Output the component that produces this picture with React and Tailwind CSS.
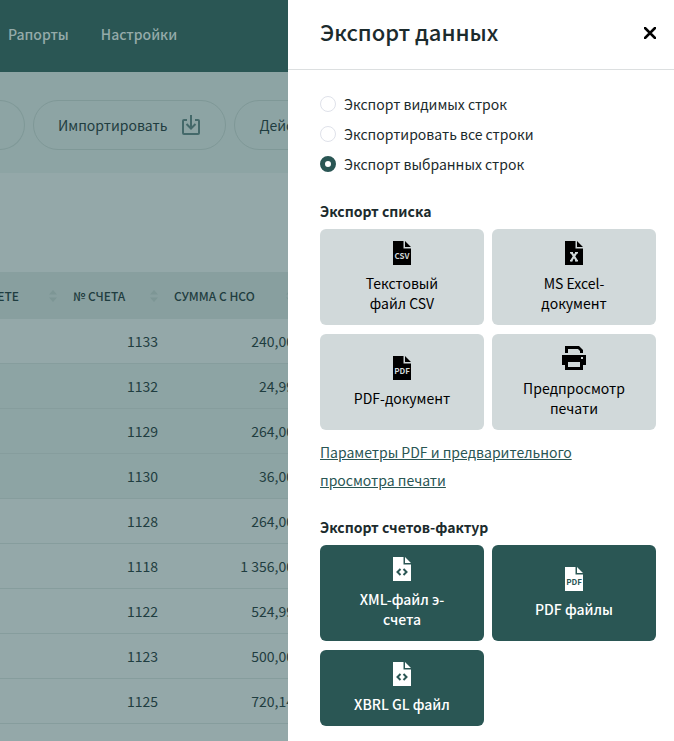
import React, { useState } from "react";

const rows = [
  { number: "1133", total: "240,00", selected: false },
  { number: "1132", total: "24,99", selected: true },
  { number: "1129", total: "264,00", selected: true },
  { number: "1130", total: "36,00", selected: true },
  { number: "1128", total: "264,00", selected: false },
  { number: "1118", total: "1 356,00", selected: false },
  { number: "1122", total: "524,99", selected: false },
  { number: "1123", total: "500,00", selected: false },
  { number: "1125", total: "720,14", selected: false },
];

const rangeOptions = [
  { id: "visible", label: "Экспорт видимых строк" },
  { id: "all", label: "Экспортировать все строки" },
  { id: "selected", label: "Экспорт выбранных строк" },
];

function FileIcon({ children }) {
  return (
    <svg className="w-6 h-6" viewBox="0 0 24 24" fill="currentColor" aria-hidden="true">
      <path d="M3 0H13.500V7.500H21V24H3ZM15 0L21 6H15Z" />
      {children}
    </svg>
  );
}

function TextFileIcon({ text, color }) {
  return (
    <FileIcon>
      <text
        x="12"
        y="18"
        textAnchor="middle"
        fontSize="8"
        fontWeight="700"
        fill={color}
        fontFamily="Noto Sans CJK SC, sans-serif"
      >
        {text}
      </text>
    </FileIcon>
  );
}

function ExcelFileIcon() {
  return (
    <FileIcon>
      <path
        d="M9.500 11.500L15 20M14.500 11.500L9 20"
        fill="none"
        stroke="#d1d9da"
        strokeWidth="2.200"
      />
      <path d="M8 11.800H11M13 11.800H16M8 19.800H10.500M13 19.800H16" stroke="#d1d9da" strokeWidth="1.500" />
    </FileIcon>
  );
}

function CodeFileIcon() {
  return (
    <FileIcon>
      <path d="M10.500 12L7.500 15L10.500 18M13.500 12L16.500 15L13.500 18" fill="none" stroke="#2a5654" strokeWidth="2" />
    </FileIcon>
  );
}

function PrinterIcon() {
  return (
    <svg className="w-6 h-6" viewBox="0 0 24 24" fill="currentColor" aria-hidden="true">
      <path d="M3 0H17L21 4V7H18V5L16 3H6V7H3Z" />
      <path fillRule="evenodd" d="M0 9H24V19H21V24H3V19H0ZM6 16V21H18V16ZM19 11V13H21V11Z" />
    </svg>
  );
}

function ImportIcon() {
  return (
    <svg className="w-5 h-5" viewBox="0 0 20 20" fill="none" stroke="currentColor" strokeWidth="2" aria-hidden="true">
      <path d="M6 5H3Q2 5 2 6V18Q2 19 3 19H17Q18 19 18 18V6Q18 5 17 5H14" />
      <path d="M10 0V13M5.500 9L10 13.500L14.500 9" />
    </svg>
  );
}

function SortIcon() {
  return (
    <svg className="w-2 h-3 shrink-0" viewBox="0 0 8 12" fill="#7d9695" aria-hidden="true">
      <path d="M4 0L8 4.500H0ZM4 12L0 7.500H8Z" />
    </svg>
  );
}

function HeaderCell({ label }) {
  return (
    <th className="px-2 font-medium">
      <div className="flex items-center justify-between whitespace-nowrap">
        {label}
        <SortIcon />
      </div>
    </th>
  );
}

function ExportButton({ icon, label, dark }) {
  return (
    <button
      type="button"
      className={`flex flex-col items-center justify-center gap-2 rounded-md px-8 py-3 text-sm leading-5 ${
        dark ? "bg-[#2a5654] font-medium text-white" : "bg-[#d1d9da] text-black"
      }`}
    >
      {icon}
      <span>{label}</span>
    </button>
  );
}

function InvoicePage() {
  const pill = "flex h-[50px] shrink-0 items-center gap-[14px] rounded-full border border-[#7f9897] px-6";
  const cell = "border-b border-[#869d9d] px-2 text-right whitespace-nowrap";
  return (
    <div className="min-w-0 flex-1 overflow-hidden bg-[#94a8a9] text-sm text-[#1f3d40]">
      <nav className="flex h-[72px] items-center gap-8 bg-[#2a5654] px-2 pb-1 font-medium text-[#94aaa9]">
        <a href="#reports">Рапорты</a>
        <a href="#settings">Настройки</a>
      </nav>

      <div className="flex h-[101px] items-center gap-2 bg-[#8da4a4] pt-1">
        <button type="button" aria-label="Создать" className="h-[50px] w-[25px] shrink-0 rounded-r-full border border-l-0 border-[#7f9897]" />
        <button type="button" className={pill}>
          Импортировать
          <span className="text-[#44696a]">
            <ImportIcon />
          </span>
        </button>
        <button type="button" className={pill}>Действия</button>
      </div>

      <table className="mt-[99px] w-[302px] table-fixed border-separate border-spacing-0">
        <colgroup>
          <col className="w-[65px]" />
          <col className="w-[101px]" />
          <col className="w-[136px]" />
        </colgroup>
        <thead className="bg-[#889f9f] text-xs">
          <tr className="h-[47px]">
            <th className="pr-2 font-medium">
              <div className="flex items-center justify-end gap-[30px]">
                СЧЕТЕ
                <SortIcon />
              </div>
            </th>
            <HeaderCell label="№ СЧЕТА" />
            <HeaderCell label="СУММА С НСО" />
          </tr>
        </thead>
        <tbody>
          {rows.map((row) => (
            <tr key={row.number} className={`h-[45px] ${row.selected ? "bg-[#8da4a4]" : ""}`}>
              <td className={cell} />
              <td className={cell}>{row.number}</td>
              <td className={cell}>{row.total}</td>
            </tr>
          ))}
        </tbody>
      </table>
    </div>
  );
}

function ExportPanel() {
  const [range, setRange] = useState("selected");

  return (
    <aside className="w-[386px] shrink-0 bg-white text-sm text-[#1c2b2d]">
      <header className="flex h-[70px] items-center justify-between border-b border-[#dcdfe0] pr-[18px] pb-1 pl-8">
        <h1 className="pb-1 text-[22px] leading-8 font-medium">Экспорт данных</h1>
        <button type="button" aria-label="Закрыть" className="text-black">
          <svg className="w-3 h-3" viewBox="0 0 12 12" fill="none" stroke="currentColor" strokeWidth="2.500" strokeLinecap="round">
            <path d="M1 1L11 11M11 1L1 11" />
          </svg>
        </button>
      </header>

      <div className="pt-6 pr-[18px] pb-4 pl-8">
        <div className="flex flex-col gap-[10px]">
          {rangeOptions.map((option) => (
            <label key={option.id} className="flex items-center gap-2 leading-5">
              <input
                type="radio"
                name="range"
                checked={range === option.id}
                onChange={() => setRange(option.id)}
                className="h-4 w-4 appearance-none rounded-full border border-[#dfe2ea] checked:border-[5px] checked:border-[#2a5654]"
              />
              {option.label}
            </label>
          ))}
        </div>

        <h2 className="mt-[27px] mb-2 leading-5 font-bold">Экспорт списка</h2>
        <div className="grid grid-cols-2 gap-x-2 gap-y-[9px]">
          <ExportButton icon={<TextFileIcon text="CSV" color="#d1d9da" />} label="Текстовый файл CSV" />
          <ExportButton icon={<ExcelFileIcon />} label="MS Excel-документ" />
          <ExportButton icon={<TextFileIcon text="PDF" color="#d1d9da" />} label="PDF-документ" />
          <ExportButton icon={<PrinterIcon />} label="Предпросмотр печати" />
        </div>

        <p className="mt-2 pr-16 leading-7">
          <a href="#print-settings" className="text-[#2a5654] underline">
            Параметры PDF и предварительного просмотра печати
          </a>
        </p>

        <h2 className="mt-[23px] mb-2 leading-5 font-bold">Экспорт счетов-фактур</h2>
        <div className="grid grid-cols-2 gap-x-2 gap-y-[9px]">
          <ExportButton dark icon={<CodeFileIcon />} label="XML-файл э-счета" />
          <ExportButton dark icon={<TextFileIcon text="PDF" color="#2a5654" />} label="PDF файлы" />
          <ExportButton dark icon={<CodeFileIcon />} label="XBRL GL файл" />
        </div>
      </div>
    </aside>
  );
}

export default function App() {
  return (
    <div className="flex min-h-screen font-['Noto_Sans_CJK_SC',sans-serif]">
      <InvoicePage />
      <ExportPanel />
    </div>
  );
}
